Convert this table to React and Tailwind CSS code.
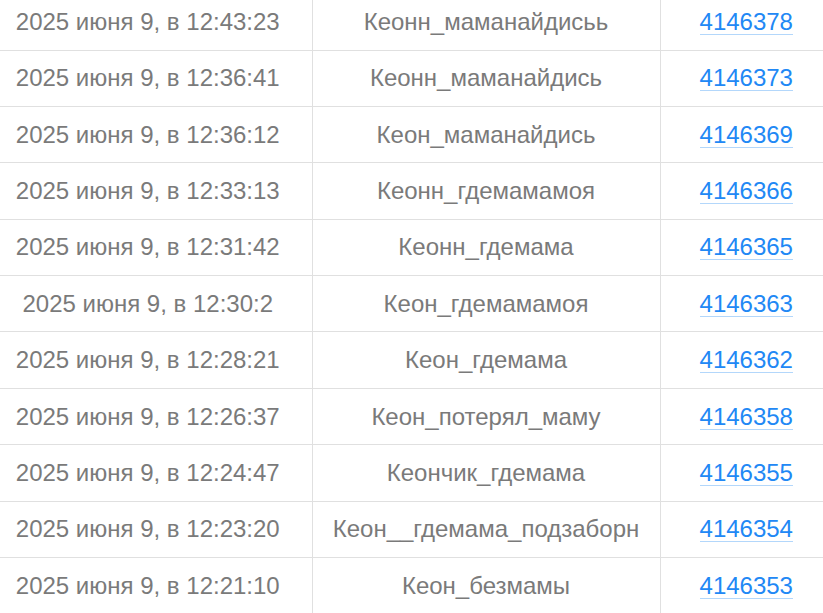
import React from 'react';

const rows = [
  { date: '2025 июня 9, в 12:43:23', name: 'Кеонн_маманайдисьь', id: '4146378' },
  { date: '2025 июня 9, в 12:36:41', name: 'Кеонн_маманайдись', id: '4146373' },
  { date: '2025 июня 9, в 12:36:12', name: 'Кеон_маманайдись', id: '4146369' },
  { date: '2025 июня 9, в 12:33:13', name: 'Кеонн_гдемамамоя', id: '4146366' },
  { date: '2025 июня 9, в 12:31:42', name: 'Кеонн_гдемама', id: '4146365' },
  { date: '2025 июня 9, в 12:30:2', name: 'Кеон_гдемамамоя', id: '4146363' },
  { date: '2025 июня 9, в 12:28:21', name: 'Кеон_гдемама', id: '4146362' },
  { date: '2025 июня 9, в 12:26:37', name: 'Кеон_потерял_маму', id: '4146358' },
  { date: '2025 июня 9, в 12:24:47', name: 'Кеончик_гдемама', id: '4146355' },
  { date: '2025 июня 9, в 12:23:20', name: 'Кеон__гдемама_подзаборн', id: '4146354' },
  { date: '2025 июня 9, в 12:21:10', name: 'Кеон_безмамы', id: '4146353' },
];

const App = () => {
  return (
    <div className="w-[823px] h-[613px] overflow-hidden bg-white">
      {/* table is scrolled a bit: first row is cut off at the top */}
      <table
        className="-mt-[6.4px] -ml-[16px] w-[848px] border-collapse text-[24px] text-[#7a7a7a]"
        style={{ fontFamily: '"Liberation Sans", Arial, sans-serif' }}
      >
        <tbody>
          {rows.map((row, idx) => (
            <tr key={idx} className="h-[56.4px] border-b border-[#e0e0e0]">
              <td className="w-[328px] text-center border-r border-[#e0e0e0] p-0">{row.date}</td>
              <td className="w-[348px] text-center border-r border-[#e0e0e0] p-0">{row.name}</td>
              <td className="text-center p-0">
                <a href="#" className="text-[#2188f5] border-b border-[#b3d7fb] leading-[24px] inline-block">
                  {row.id}
                </a>
              </td>
            </tr>
          ))}
        </tbody>
      </table>
    </div>
  );
};

export default App;
